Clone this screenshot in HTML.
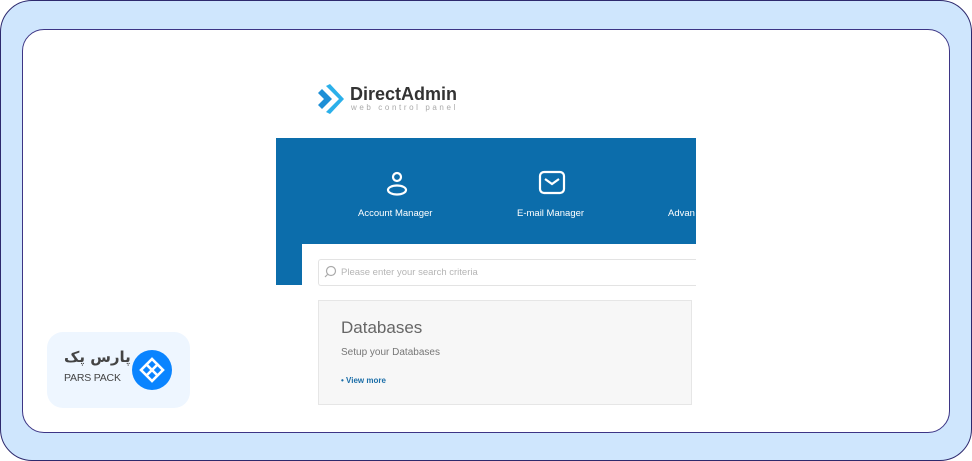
<!DOCTYPE html>
<html><head><meta charset="utf-8"><style>
*{margin:0;padding:0;box-sizing:border-box}
body{width:972px;height:461px;background:#fff;font-family:"Liberation Sans",sans-serif;position:relative;overflow:hidden}
.outer{position:absolute;left:0;top:0;width:972px;height:461px;background:#cfe6fd;border:1.5px solid #2e2a6e;border-radius:32px}
.inner{position:absolute;left:22px;top:29px;width:928px;height:404px;background:#fff;border:1.5px solid #3d3585;border-radius:22px;overflow:hidden}
.abs{position:absolute}
.t{color:#fff;font-size:9.5px;position:absolute}
</style></head><body>
<div class="outer"></div>
<div class="inner"></div>
<svg class="abs" style="left:316px;top:84px" width="30" height="30" viewBox="0 0 30 30">
<polygon points="2,9 8,15 2,21 6,25 16,15 6,5" fill="#1e8fd6"/>
<polygon points="10,2 23,15 10,28 14,30 28,15 14,0" fill="#2bb0ea"/>
</svg>
<div class="abs" style="left:350px;top:84px;font-size:18px;font-weight:bold;color:#333">DirectAdmin</div>
<div class="abs" style="left:351px;top:103px;font-size:8px;letter-spacing:2.6px;color:#aaa">web control panel</div>
<div class="abs" style="left:276px;top:138px;width:420px;height:106px;background:#0c6dab"></div>
<div class="abs" style="left:276px;top:244px;width:26px;height:41px;background:#0c6dab"></div>
<div class="abs" style="left:276px;top:285px;width:26px;height:122px;background:#fff"></div>
<div class="abs" style="left:302px;top:244px;width:394px;height:163px;background:#fff"></div>
<svg class="abs" style="left:384px;top:170px" width="26" height="26" viewBox="0 0 26 26" fill="none" stroke="#fff" stroke-width="2.2">
<circle cx="13" cy="7" r="4"/><ellipse cx="13" cy="20" rx="9" ry="4.5"/></svg>
<svg class="abs" style="left:538px;top:170px" width="28" height="26" viewBox="0 0 28 26" fill="none" stroke="#fff" stroke-width="2.2">
<rect x="2" y="2" width="24" height="21" rx="4"/><path d="M7 9l7 5 7-5"/></svg>
<div class="t" style="left:358px;top:208px">Account Manager</div>
<div class="t" style="left:517px;top:208px">E-mail Manager</div>
<div class="t" style="left:668px;top:208px">Advan</div>
<div class="abs" style="left:318px;top:259px;width:378px;height:27px;border:1px solid #e3e3e3;border-right:none;border-radius:3px 0 0 3px;background:#fff"></div>
<svg class="abs" style="left:324px;top:265px" width="14" height="14" viewBox="0 0 14 14" fill="none" stroke="#aaa" stroke-width="1.2"><circle cx="7" cy="6" r="4.5"/><path d="M3.5 9.5L1 12"/></svg>
<div class="abs" style="left:341px;top:267px;font-size:9.5px;color:#b5b5b5">Please enter your search criteria</div>
<div class="abs" style="left:318px;top:300px;width:374px;height:105px;background:#f7f7f7;border:1px solid #e6e6e6"></div>
<div class="abs" style="left:341px;top:318px;font-size:17px;color:#666">Databases</div>
<div class="abs" style="left:341px;top:347px;font-size:10px;color:#777">Setup your Databases</div>
<div class="abs" style="left:341px;top:376px;font-size:8px;font-weight:bold;color:#1b6ea8">• View more</div>
<div class="abs" style="left:47px;top:332px;width:143px;height:76px;background:#eef6ff;border-radius:16px"></div>
<div class="abs" style="left:64px;top:348px;font-size:15px;font-weight:bold;color:#444;font-family:'DejaVu Sans',sans-serif">پارس پک</div>
<div class="abs" style="left:64px;top:372px;font-size:10.5px;color:#444;letter-spacing:-0.2px">PARS PACK</div>
<svg class="abs" style="left:132px;top:350px" width="40" height="40" viewBox="0 0 40 40">
<circle cx="20" cy="20" r="20" fill="#0a84ff"/>
<g fill="none" stroke="#fff" stroke-width="2.6" stroke-linejoin="miter"><path d="M20 31L9 20l5.5-5.5L20 20l5.5-5.5L31 20z"/><path d="M14.5 14.5L20 9l5.5 5.5"/><path d="M20 20l-5.5 5.5M20 20l5.5 5.5"/></g>
</svg>
</body></html>
